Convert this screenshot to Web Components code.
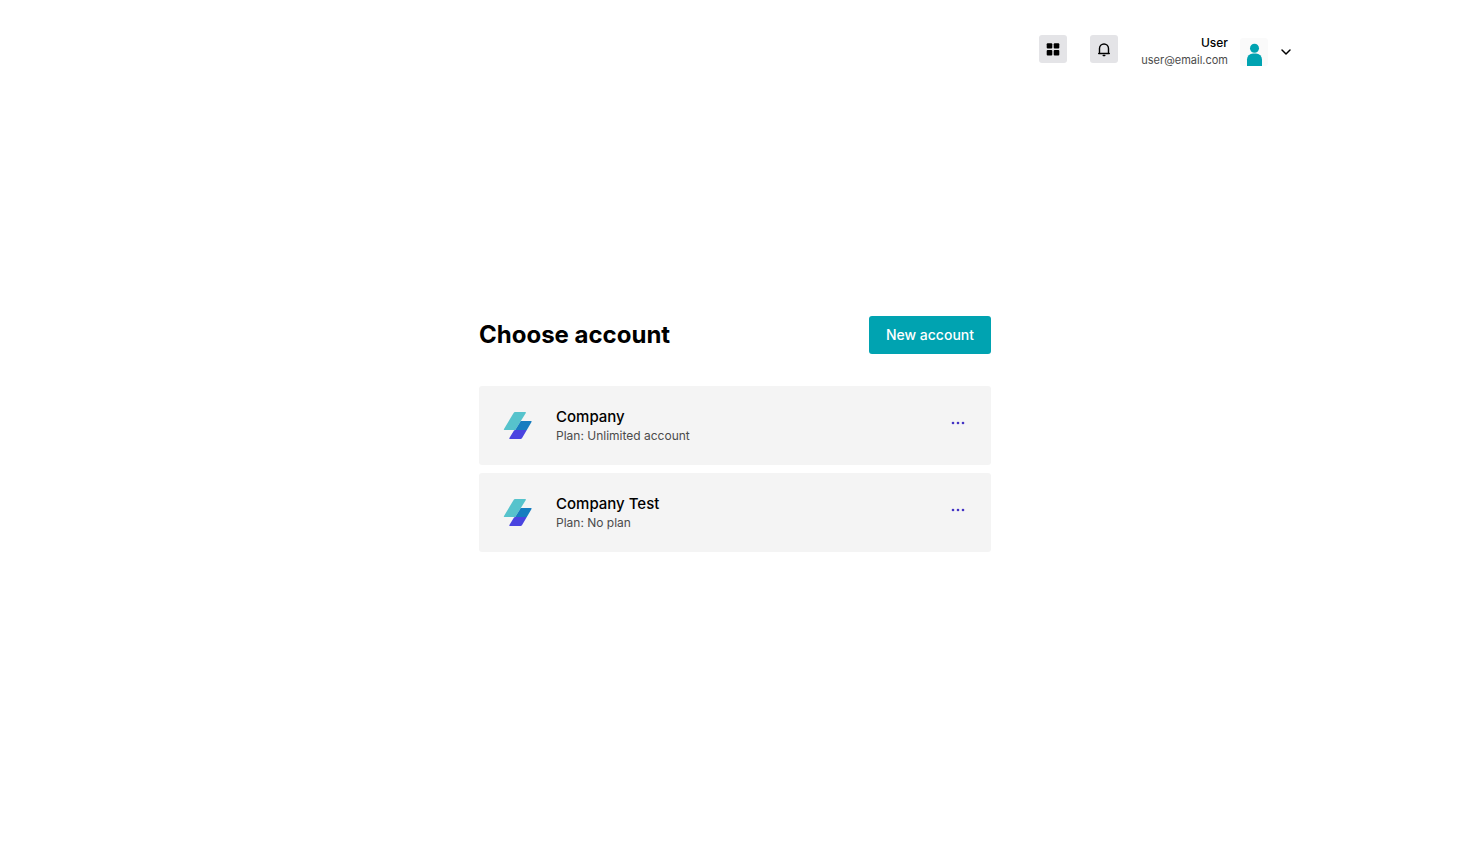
<!DOCTYPE html>
<html lang="en">
<head>
<meta charset="utf-8">
<meta name="viewport" content="width=device-width, initial-scale=1">
<title>Choose account</title>
<style>
    body {
        margin: 0;
        background-color: #fff;
        color: #000;
        font-family: Inter, "Liberation Sans", sans-serif;
    }
</style>
</head>
<body>
<account-page>
    <app-header slot="header">
        <icon-button slot="actions" icon="grid" label="Apps"></icon-button>
        <icon-button slot="actions" icon="bell" label="Notifications"></icon-button>
        <user-menu slot="user">
            <span slot="name">User</span>
            <span slot="email">user@email.com</span>
        </user-menu>
    </app-header>
    <account-chooser>
        <span slot="title">Choose account</span>
        <account-card>
            <span slot="name">Company</span>
            <span slot="plan">Plan: Unlimited account</span>
        </account-card>
        <account-card>
            <span slot="name">Company Test</span>
            <span slot="plan">Plan: No plan</span>
        </account-card>
    </account-chooser>
</account-page>

<script>
const icons = {
    grid: `
        <svg width="28" height="28" viewBox="0 0 28 28" fill="#000" aria-hidden="true">
            <rect x="7.7" y="8.2" width="5.6" height="5.4" rx="1"/>
            <rect x="14.7" y="8.2" width="5.6" height="5.4" rx="1"/>
            <rect x="7.7" y="15" width="5.6" height="5.4" rx="1"/>
            <rect x="14.7" y="15" width="5.6" height="5.4" rx="1"/>
        </svg>`,
    bell: `
        <svg width="28" height="28" viewBox="0 0 28 28" fill="none" stroke="#000" stroke-width="1.4" stroke-linecap="round" stroke-linejoin="round" aria-hidden="true">
            <path d="M8.7 18.5h10.6M9.5 18.5v-5a4.5 4.5 0 0 1 9 0v5"/>
            <path d="M13.2 20.5h1.6"/>
        </svg>`
};

class AccountPage extends HTMLElement {
    constructor() {
        super();
        this.attachShadow({mode: "open"}).innerHTML = `
        <style>
            :host {
                display: flex;
                flex-direction: column;
                min-height: 100vh;
            }
            main {
                display: flex;
                justify-content: center;
                padding: 247px 24px 48px;
            }
        </style>
        <slot name="header"></slot>
        <main><slot></slot></main>`;
    }
}

class AppHeader extends HTMLElement {
    constructor() {
        super();
        this.attachShadow({mode: "open"}).innerHTML = `
        <style>
            :host {
                display: block;
                padding: 35px 24px 0;
            }
            header {
                display: flex;
                justify-content: flex-end;
                align-items: flex-start;
                gap: 23px;
                max-width: 1114px;
                margin: 0 auto;
            }
        </style>
        <header>
            <slot name="actions"></slot>
            <slot name="user"></slot>
        </header>`;
    }
}

class IconButton extends HTMLElement {
    connectedCallback() {
        if (this.shadowRoot) return;
        this.attachShadow({mode: "open"}).innerHTML = `
        <style>
            :host {
                display: block;
            }
            button {
                display: block;
                padding: 0;
                border: 0;
                border-radius: 3px;
                background-color: #e4e4e7;
                cursor: pointer;
            }
            svg {
                display: block;
            }
        </style>
        <button type="button" aria-label="${this.getAttribute("label")}">
            ${icons[this.getAttribute("icon")]}
        </button>`;
    }
}

class UserMenu extends HTMLElement {
    constructor() {
        super();
        this.attachShadow({mode: "open"}).innerHTML = `
        <style>
            :host {
                display: block;
            }
            button {
                display: flex;
                align-items: center;
                gap: 12px;
                padding: 0;
                border: 0;
                background: none;
                color: inherit;
                font: inherit;
                text-align: right;
                cursor: pointer;
            }
            .text {
                display: flex;
                flex-direction: column;
            }
            .name {
                font-size: 12px;
                font-weight: 500;
                line-height: 16px;
            }
            .email {
                color: #4b4b4b;
                font-size: 11px;
                line-height: 18px;
            }
            svg {
                display: block;
            }
            .avatar {
                border-radius: 3px;
                background-color: #fafafa;
            }
        </style>
        <button type="button" aria-haspopup="menu">
            <span class="text">
                <span class="name"><slot name="name"></slot></span>
                <span class="email"><slot name="email"></slot></span>
            </span>
            <svg class="avatar" width="28" height="28" viewBox="0 0 28 28" fill="#00a3b1" aria-hidden="true">
                <circle cx="14.5" cy="10.3" r="4.5"/>
                <path d="M7 28v-6.5a6 6 0 0 1 6-6h3a6 6 0 0 1 6 6v6.5z"/>
            </svg>
            <svg width="12" height="12" viewBox="0 0 12 12" fill="none" stroke="#000" stroke-width="1.5" stroke-linecap="round" stroke-linejoin="round" aria-hidden="true">
                <path d="M2 4l4 4 4-4"/>
            </svg>
        </button>`;
    }
}

class AccountChooser extends HTMLElement {
    constructor() {
        super();
        this.attachShadow({mode: "open"}).innerHTML = `
        <style>
            :host {
                display: block;
                width: 100%;
                max-width: 512px;
            }
            .top {
                display: flex;
                justify-content: space-between;
                align-items: center;
                margin-bottom: 32px;
            }
            h1 {
                margin: 0;
                font-size: 24px;
                font-weight: 700;
                line-height: 32px;
            }
            button {
                padding: 8px 17px;
                border: 0;
                border-radius: 3px;
                background-color: #00a3b1;
                color: #fff;
                font-family: inherit;
                font-size: 14px;
                font-weight: 500;
                line-height: 22px;
                cursor: pointer;
            }
            .list {
                display: flex;
                flex-direction: column;
                gap: 8px;
            }
        </style>
        <div class="top">
            <h1><slot name="title"></slot></h1>
            <button type="button">New account</button>
        </div>
        <div class="list"><slot></slot></div>`;
    }
}

class AccountCard extends HTMLElement {
    constructor() {
        super();
        this.attachShadow({mode: "open"}).innerHTML = `
        <style>
            :host {
                display: flex;
                align-items: center;
                padding: 20px 24px;
                border-radius: 3px;
                background-color: #f4f4f4;
            }
            svg {
                display: block;
            }
            .logo {
                flex: none;
                margin-right: 24px;
            }
            .text {
                flex: 1;
            }
            h2, p {
                margin: 0;
            }
            h2 {
                font-size: 15px;
                font-weight: 500;
                line-height: 21px;
            }
            p {
                color: #4b4b4b;
                font-size: 12px;
                line-height: 18px;
            }
            button {
                align-self: flex-start;
                padding: 8px 0;
                border: 0;
                background: none;
                cursor: pointer;
            }
        </style>
        <svg class="logo" width="29" height="29" viewBox="0 0 29 29" aria-hidden="true">
            <path fill="#56c3cc" d="M12 1h10.2q1.2 0 .6 1L12.2 19H1.4q-1 0-.4-1L10.6 2q.6-1 1.4-1z"/>
            <path fill="#167dc0" d="M17.8 10h10.2q1 0 .5 1l-4.7 8H12.2z"/>
            <path fill="#4a44e0" d="M12.2 19h11.6l-4.7 8q-.6 1-1.5 1H6.9q-1.1 0-.5-1l4.6-7.5q.3-.5 1.2-.5z"/>
        </svg>
        <div class="text">
            <h2><slot name="name"></slot></h2>
            <p><slot name="plan"></slot></p>
        </div>
        <button type="button" aria-label="Account options">
            <svg width="18" height="18" viewBox="0 0 18 18" fill="#4433c4" aria-hidden="true">
                <circle cx="4" cy="9" r="1.3"/>
                <circle cx="9" cy="9" r="1.3"/>
                <circle cx="14" cy="9" r="1.3"/>
            </svg>
        </button>`;
    }
}

customElements.define("account-page", AccountPage);
customElements.define("app-header", AppHeader);
customElements.define("icon-button", IconButton);
customElements.define("user-menu", UserMenu);
customElements.define("account-chooser", AccountChooser);
customElements.define("account-card", AccountCard);
</script>
</body>
</html>
